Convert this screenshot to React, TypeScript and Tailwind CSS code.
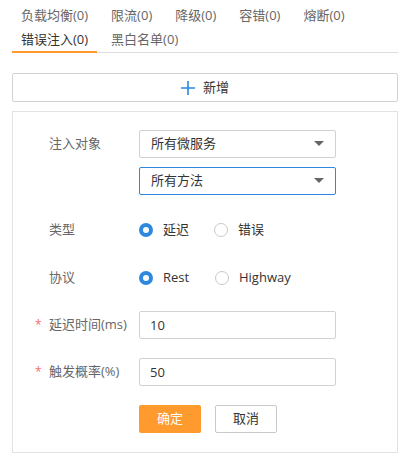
import React, { useState, FC } from 'react';

const tabsRow1 = ['负载均衡(0)', '限流(0)', '降级(0)', '容错(0)', '熔断(0)'];
const tabsRow2 = ['错误注入(0)', '黑白名单(0)'];

const Radio: FC<{ checked: boolean; label: string; onClick: () => void; width?: string }> = ({ checked, label, onClick, width }) => (
    <div onClick={onClick} className={`flex items-center cursor-pointer ${width || ''}`}>
        <span
            className={`w-[14px] h-[14px] rounded-full box-border ${checked ? 'border-[4px] border-[#2d88df] bg-white' : 'border border-[#c9c9c9] bg-white'}`}
        />
        <span className="ml-[10px] text-[#333]">{label}</span>
    </div>
);

const Select: FC<{ value: string; active?: boolean }> = ({ value, active }) => (
    <div
        className={`w-[197px] h-[28px] flex items-center justify-between pl-[11px] pr-[11px] bg-white border rounded-[2px] ${active ? 'border-[#2d88df]' : 'border-[#d2d2d2]'}`}
    >
        <span className="text-[#333]">{value}</span>
        <svg width="10" height="6" viewBox="0 0 10 6">
            <path d="M0 0 L10 0 L5 5 Z" fill="#666" />
        </svg>
    </div>
);

const Label: FC<{ text: string; required?: boolean }> = ({ text, required }) => (
    <div className="w-[126px] flex items-center pl-[22px] text-[#666]">
        <span className="w-[14px] text-[#f56c6c] text-[12px] leading-none">{required ? '*' : ''}</span>
        <span>{text}</span>
    </div>
);

const App: FC = () => {
    const [activeTab] = useState('错误注入(0)');
    const [type, setType] = useState('delay');
    const [protocol, setProtocol] = useState('rest');

    const renderTab = (t: string) => (
        <div
            key={t}
            className={`h-[24px] flex items-center px-[9px] mr-[5px] border-b-2 ${t === activeTab ? 'border-[#ff9a2e] text-[#333]' : 'border-transparent text-[#666]'}`}
        >
            {t}
        </div>
    );

    return (
        <div
            className="w-[403px] h-[458px] bg-white text-[13px] overflow-hidden"
            style={{ fontFamily: '"Open Sans", "Noto Sans CJK SC", sans-serif' }}
        >
            <div className="mx-[12px] mt-[5px] border-b border-[#ddd] mr-[5px]">
                <div className="flex">{tabsRow1.map(renderTab)}</div>
                <div className="flex -mb-px">{tabsRow2.map(renderTab)}</div>
            </div>

            <button className="mt-[20px] mx-[12px] w-[386px] h-[29px] flex items-center justify-center border border-[#d2d2d2] rounded-[2px] bg-white text-[#333]">
                <svg width="14" height="14" viewBox="0 0 14 14" className="mr-[8px]">
                    <path d="M7 0 V14 M0 7 H14" stroke="#2d88df" strokeWidth="1.6" />
                </svg>
                新增
            </button>

            <div className="mt-[9px] mx-[12px] w-[386px] h-[342px] border border-[#e3e3e3] pt-[18px]">
                <div className="flex items-start">
                    <div className="h-[28px] flex items-center">
                        <Label text="注入对象" />
                    </div>
                    <div className="flex flex-col gap-[9px]">
                        <Select value="所有微服务" />
                        <Select value="所有方法" active />
                    </div>
                </div>

                <div className="flex items-center h-[28px] mt-[21px]">
                    <Label text="类型" />
                    <Radio checked={type === 'delay'} label="延迟" onClick={() => setType('delay')} width="w-[75px]" />
                    <Radio checked={type === 'error'} label="错误" onClick={() => setType('error')} />
                </div>

                <div className="flex items-center h-[28px] mt-[20px]">
                    <Label text="协议" />
                    <Radio checked={protocol === 'rest'} label="Rest" onClick={() => setProtocol('rest')} width="w-[76px]" />
                    <Radio checked={protocol === 'highway'} label="Highway" onClick={() => setProtocol('highway')} />
                </div>

                <div className="flex items-center mt-[19px]">
                    <Label text="延迟时间(ms)" required />
                    <input
                        defaultValue="10"
                        className="w-[197px] h-[28px] px-[10px] border border-[#d2d2d2] rounded-[2px] text-[#333] outline-none"
                    />
                </div>

                <div className="flex items-center mt-[19px]">
                    <Label text="触发概率(%)" required />
                    <input
                        defaultValue="50"
                        className="w-[197px] h-[28px] px-[10px] border border-[#d2d2d2] rounded-[2px] text-[#333] outline-none"
                    />
                </div>

                <div className="flex items-center mt-[19px] pl-[126px] gap-[14px]">
                    <button className="w-[62px] h-[28px] bg-[#ff9a2e] text-white rounded-[2px]">确定</button>
                    <button className="w-[62px] h-[28px] bg-white border border-[#c9c9c9] text-[#333] rounded-[2px]">取消</button>
                </div>
            </div>
        </div>
    );
};

export default App;
